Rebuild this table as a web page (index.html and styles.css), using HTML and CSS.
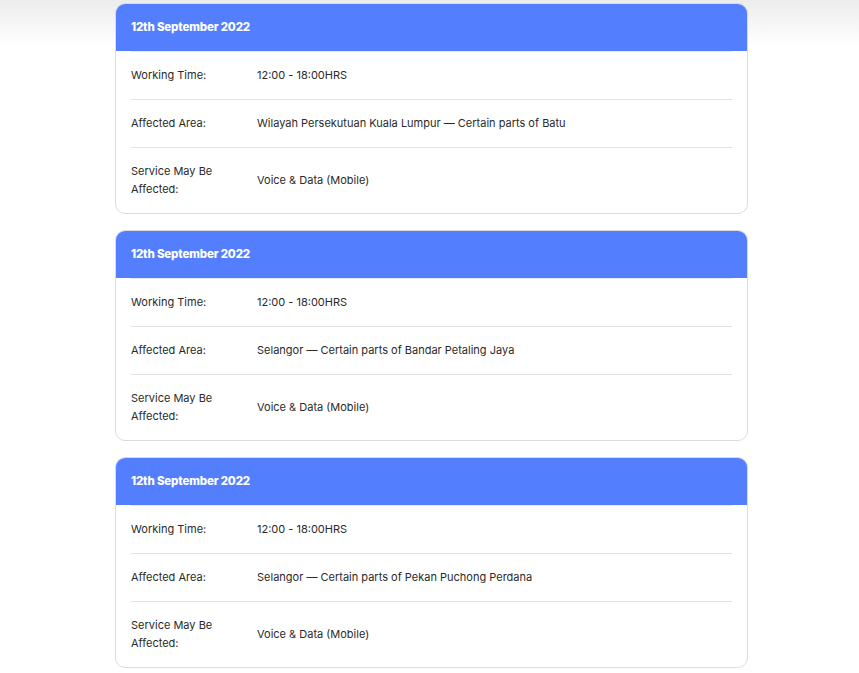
FILE: index.html
```html
<!DOCTYPE html>
<html>
<head>
<meta charset="utf-8">
<link rel="stylesheet" href="styles.css">
</head>
<body>
<div class="page">
  <div class="card">
    <div class="card-head">12th September 2022</div>
    <div class="card-body">
      <div class="row"><div class="label">Working Time:</div><div class="value">12:00 - 18:00HRS</div></div>
      <div class="row"><div class="label">Affected Area:</div><div class="value">Wilayah Persekutuan Kuala Lumpur — Certain parts of Batu</div></div>
      <div class="row"><div class="label">Service May Be Affected:</div><div class="value">Voice &amp; Data (Mobile)</div></div>
    </div>
  </div>
  <div class="card">
    <div class="card-head">12th September 2022</div>
    <div class="card-body">
      <div class="row"><div class="label">Working Time:</div><div class="value">12:00 - 18:00HRS</div></div>
      <div class="row"><div class="label">Affected Area:</div><div class="value">Selangor — Certain parts of Bandar Petaling Jaya</div></div>
      <div class="row"><div class="label">Service May Be Affected:</div><div class="value">Voice &amp; Data (Mobile)</div></div>
    </div>
  </div>
  <div class="card">
    <div class="card-head">12th September 2022</div>
    <div class="card-body">
      <div class="row"><div class="label">Working Time:</div><div class="value">12:00 - 18:00HRS</div></div>
      <div class="row"><div class="label">Affected Area:</div><div class="value">Selangor — Certain parts of Pekan Puchong Perdana</div></div>
      <div class="row"><div class="label">Service May Be Affected:</div><div class="value">Voice &amp; Data (Mobile)</div></div>
    </div>
  </div>
</div>
</body>
</html>
```
FILE: styles.css
```css
html, body {
  margin: 0;
  padding: 0;
}
body {
  background: linear-gradient(to bottom, #ececec 0px, #ffffff 46px) no-repeat, #ffffff;
  font-family: Inter, "Liberation Sans", sans-serif;
  color: #2a2a2a;
  padding-left: 4px;
}
.page {
  width: 633px;
  margin: 0 auto;
  padding-top: 3px;
  display: flex;
  flex-direction: column;
  gap: 16px;
}
.card {
  border: 1px solid #dcdcdc;
  border-radius: 10px;
  background: #fff;
  overflow: hidden;
}
.card-head {
  background: #537fff;
  color: #fff;
  font-weight: 800;
  font-size: 11.5px;
  height: 47px;
  line-height: 47px;
  padding: 0 15px;
  letter-spacing: -0.15px;
}
.card-body {
  padding: 0 15px;
}
.row {
  display: flex;
  align-items: center;
  padding: 14px 0 15px;
  border-top: 1px solid #e2e2e2;
  font-size: 11px;
  line-height: 18px;
}
.row:first-child {
  border-top-color: #e8e8e8;
}
.label {
  width: 126px;
  flex: none;
  padding-right: 30px;
  box-sizing: border-box;
}
.value {
  flex: 1;
}
```
